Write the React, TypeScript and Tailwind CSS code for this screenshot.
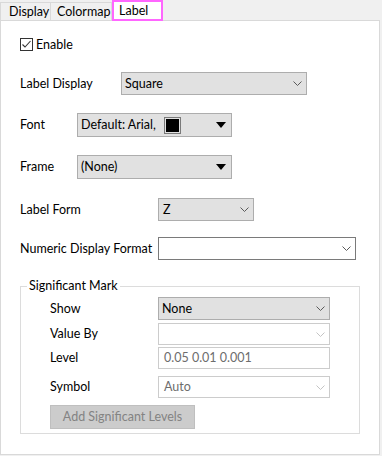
import React from "react";

const Chevron = ({ color = "#5a5a5a" }: { color?: string }) => (
  <svg width="9" height="5" viewBox="0 0 9 5" className="shrink-0">
    <path d="M0.5 0.5 L4.5 4.5 L8.5 0.5" fill="none" stroke={color} strokeWidth="1" />
  </svg>
);

const Tri = () => (
  <svg width="10" height="6" viewBox="0 0 10 6" className="shrink-0">
    <path d="M0 0 H10 L5 6 Z" fill="#000" />
  </svg>
);

function Row({ label, labelW, children, className = "" }: { label: string; labelW: string; children: React.ReactNode; className?: string }) {
  return (
    <div className={`flex items-center ${className}`}>
      <div className={`${labelW} shrink-0 whitespace-nowrap`}>{label}</div>
      {children}
    </div>
  );
}

export default function App() {
  return (
    <div
      className="w-[382px] h-[456px] bg-[#f0f0f0] text-[12.5px] leading-[16px] text-black overflow-hidden"
      style={{ fontFamily: 'Lato, "Noto Sans", "Liberation Sans", sans-serif' }}
    >
      {/* Tabs */}
      <div className="flex h-[20px] items-end">
        <div className="h-[18px] w-[51px] border-t border-l border-r border-[#d9d9d9] flex items-center pl-[8px]">Display</div>
        <div className="h-[18px] w-[61px] border-t border-r border-[#d9d9d9] flex items-center pl-[6px]">Colormap</div>
        <div className="h-[21px] w-[51px] border-2 border-[#ff66ff] bg-white flex items-center pl-[5px] -mb-px relative">Label</div>
      </div>
      {/* Panel */}
      <div className="w-[380px] h-[435px] bg-white border border-[#d9d9d9] pl-[19px] flex flex-col">
        <div className="mt-[17px] flex items-center h-[13px]">
          <div className="w-[13px] h-[13px] border border-[#333] bg-white flex items-center justify-center">
            <svg width="11" height="11" viewBox="0 0 11 11">
              <path d="M1.5 5.5 L4 8 L9.5 2" fill="none" stroke="#333" strokeWidth="1.1" />
            </svg>
          </div>
          <span className="ml-[3px]">Enable</span>
        </div>

        <Row label="Label Display" labelW="w-[101px]" className="mt-[21px]">
          <div className="w-[186px] h-[23px] bg-[#e1e1e1] border border-[#adadad] flex items-center justify-between pl-[3px] pr-[4px]">
            <span>Square</span>
            <Chevron />
          </div>
        </Row>

        <Row label="Font" labelW="w-[57px]" className="mt-[18px]">
          <div className="w-[155px] h-[24px] bg-[#e1e1e1] border border-[#adadad] flex items-center pl-[3px] pr-[5px]">
            <span>Default: Arial,</span>
            <div className="ml-[8px] w-[17px] h-[17px] border border-[#7a7a7a] p-px bg-[#e1e1e1]">
              <div className="w-full h-full bg-black" />
            </div>
            <div className="flex-1" />
            <Tri />
          </div>
        </Row>

        <Row label="Frame" labelW="w-[57px]" className="mt-[18px]">
          <div className="w-[155px] h-[24px] bg-[#e1e1e1] border border-[#adadad] flex items-center pl-[3px] pr-[5px]">
            <span>(None)</span>
            <div className="flex-1" />
            <Tri />
          </div>
        </Row>

        <Row label="Label Form" labelW="w-[138px]" className="mt-[19px]">
          <div className="w-[96px] h-[23px] bg-[#e1e1e1] border border-[#adadad] flex items-center justify-between pl-[4px] pr-[4px]">
            <span>Z</span>
            <Chevron />
          </div>
        </Row>

        <Row label="Numeric Display Format" labelW="w-[138px]" className="mt-[16px]">
          <div className="w-[198px] h-[23px] bg-white border border-[#7a7a7a] flex items-center justify-end pr-[4px]">
            <Chevron />
          </div>
        </Row>

        <fieldset className="mt-[18px] w-[340px] h-[156px] border border-[#dcdcdc] p-0 m-0 min-w-0">
          <legend className="ml-[6px] px-[2px] leading-[16px]">Significant Mark</legend>
          <div className="pl-[29px] flex flex-col">
            <Row label="Show" labelW="w-[108px]" className="mt-[3px]">
              <div className="w-[172px] h-[23px] bg-[#e1e1e1] border border-[#adadad] flex items-center justify-between pl-[3px] pr-[4px]">
                <span>None</span>
                <Chevron />
              </div>
            </Row>
            <Row label="Value By" labelW="w-[108px]" className="mt-[3px]">
              <div className="w-[172px] h-[22px] bg-white border border-[#cccccc] flex items-center justify-end pr-[4px]">
                <Chevron color="#c4c4c4" />
              </div>
            </Row>
            <Row label="Level" labelW="w-[108px]" className="mt-[2px]">
              <div className="w-[172px] h-[22px] bg-white border border-[#cccccc] flex items-center pl-[5px] text-[#6d6d6d]">
                0.05 0.01 0.001
              </div>
            </Row>
            <Row label="Symbol" labelW="w-[108px]" className="mt-[7px]">
              <div className="w-[172px] h-[22px] bg-white border border-[#cccccc] flex items-center justify-between pl-[5px] pr-[4px] text-[#6d6d6d]">
                <span>Auto</span>
                <Chevron color="#c4c4c4" />
              </div>
            </Row>
            <div className="mt-[7px] w-[145px] h-[24px] bg-[#cccccc] border border-[#bfbfbf] flex items-center justify-center text-[#838383]">
              Add Significant Levels
            </div>
          </div>
        </fieldset>
      </div>
    </div>
  );
}
